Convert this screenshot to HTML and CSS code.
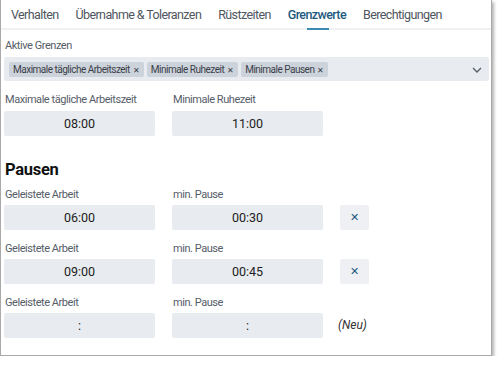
FILE: index.html
```html
<!DOCTYPE html>
<html lang="de">
<head>
    <meta charset="UTF-8">
    <title>Grenzwerte</title>
    <link rel="stylesheet" href="styles.css">
</head>
<body>
    <div class="panel">
        <nav class="tabs">
            <span class="tab">Verhalten</span>
            <span class="tab">Übernahme &amp; Toleranzen</span>
            <span class="tab">Rüstzeiten</span>
            <span class="tab active">Grenzwerte</span>
            <span class="tab">Berechtigungen</span>
        </nav>

        <div class="content">
            <label class="label">Aktive Grenzen</label>
            <div class="select">
                <span class="chip">Maximale tägliche Arbeitszeit <span class="x">✕</span></span>
                <span class="chip">Minimale Ruhezeit <span class="x">✕</span></span>
                <span class="chip">Minimale Pausen <span class="x">✕</span></span>
                <svg class="chevron" width="10" height="6" viewBox="0 0 10 6"><path d="M1 1l4 4 4-4" fill="none" stroke="#555c66" stroke-width="1.3"/></svg>
            </div>

            <div class="row top">
                <div class="field">
                    <label class="label">Maximale tägliche Arbeitszeit</label>
                    <div class="input">08:00</div>
                </div>
                <div class="field">
                    <label class="label">Minimale Ruhezeit</label>
                    <div class="input">11:00</div>
                </div>
            </div>

            <h2>Pausen</h2>

            <div class="row">
                <div class="field">
                    <label class="label">Geleistete Arbeit</label>
                    <div class="input">06:00</div>
                </div>
                <div class="field">
                    <label class="label">min. Pause</label>
                    <div class="input">00:30</div>
                </div>
                <button class="remove">✕</button>
            </div>
            <div class="row">
                <div class="field">
                    <label class="label">Geleistete Arbeit</label>
                    <div class="input">09:00</div>
                </div>
                <div class="field">
                    <label class="label">min. Pause</label>
                    <div class="input">00:45</div>
                </div>
                <button class="remove">✕</button>
            </div>
            <div class="row">
                <div class="field">
                    <label class="label">Geleistete Arbeit</label>
                    <div class="input">:</div>
                </div>
                <div class="field">
                    <label class="label">min. Pause</label>
                    <div class="input">:</div>
                </div>
                <span class="new">(Neu)</span>
            </div>
        </div>
    </div>
</body>
</html>
```

FILE: styles.css
```css
body {
    margin: 0;
    background: #fff;
    font-family: Roboto, "Liberation Sans", sans-serif;
    color: #222;
}
.panel {
    width: 492px;
    height: 356px;
    border: 1px solid #a9a9a9;
    border-top: none;
    box-shadow: 2px 2px 3px rgba(0, 0, 0, 0.3);
    box-sizing: border-box;
}
.tabs {
    display: flex;
    gap: 17px;
    padding: 0 0 0 10px;
    height: 28px;
    border-bottom: 2px solid #eff1f3;
    white-space: nowrap;
}
.tab {
    font-size: 12.5px;
    letter-spacing: -0.6px;
    color: #4f5560;
    line-height: 29px;
    position: relative;
}
.tab.active {
    color: #1e5a80;
    font-weight: 500;
}
.tab.active::after {
    content: "";
    position: absolute;
    left: 19px;
    width: 22px;
    bottom: -2px;
    height: 2px;
    background: #3b8bb2;
}
.content {
    padding: 9px 2px 0 3px;
}
.label {
    display: block;
    font-size: 11px;
    letter-spacing: -0.45px;
    color: #565d69;
    line-height: 14px;
    padding-left: 1px;
    white-space: nowrap;
}
.select {
    margin-top: 4px;
    height: 24px;
    background: #e8ebef;
    border-radius: 2px;
    display: flex;
    align-items: center;
    gap: 3px;
    padding: 0 5px;
    position: relative;
    white-space: nowrap;
}
.chip {
    background: #cdd3da;
    border-radius: 2px;
    font-size: 10px;
    letter-spacing: -0.5px;
    color: #3a404a;
    height: 15px;
    line-height: 15px;
    padding: 0 4px;
}
.chip .x {
    font-size: 8px;
    margin-left: 1px;
    letter-spacing: 0;
}
.chevron {
    position: absolute;
    right: 7px;
    top: 10px;
}
.row {
    display: flex;
    align-items: flex-end;
    margin-top: 12px;
}
.field {
    width: 151px;
    margin-right: 17px;
}
.input {
    margin-top: 3px;
    height: 25px;
    line-height: 25px;
    background: #e8ebef;
    border-radius: 2px;
    text-align: center;
    font-size: 12.5px;
    color: #222;
}
.top .input {
    margin-top: 4px;
}
h2 {
    margin: 24px 0 -4px 1px;
    font-size: 16.5px;
    letter-spacing: -0.3px;
    font-weight: 700;
    color: #111;
    line-height: 20px;
}
.remove {
    width: 29px;
    height: 25px;
    border: none;
    background: #eef0f3;
    border-radius: 2px;
    color: #1e5a80;
    font-size: 11px;
    font-weight: 700;
    padding: 0;
    font-family: "DejaVu Sans", sans-serif;
}
.new {
    font-style: italic;
    font-size: 12px;
    color: #333;
    line-height: 25px;
    margin-left: -2px;
}
```
